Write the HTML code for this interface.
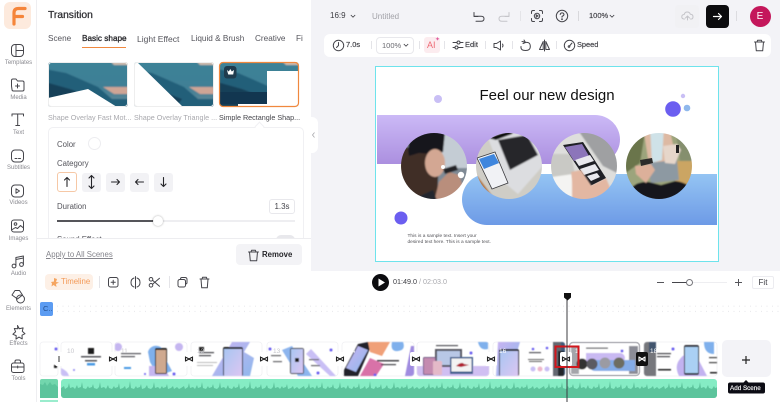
<!DOCTYPE html>
<html><head><meta charset="utf-8"><title>Transition</title>
<style>
*{box-sizing:border-box;margin:0;padding:0}
html,body{width:780px;height:402px;overflow:hidden;background:#fff;font-family:"Liberation Sans",sans-serif}
#r{position:relative;width:780px;height:402px;overflow:hidden;filter:blur(.3px)}
.a{position:absolute}
.t{position:absolute;white-space:nowrap;line-height:1}
.sl{position:absolute;width:37px;left:0;text-align:center;font-size:6px;color:#8a8a90;line-height:1}
svg{position:absolute;overflow:visible}
.i{fill:none;stroke:#45454b;stroke-width:1;stroke-linecap:round;stroke-linejoin:round}
.sep{position:absolute;width:1px;background:#e4e4e8}
.cat{position:absolute;top:173px;width:19px;height:19px;background:#f2f2f5;border-radius:3px}
.tab{position:absolute;top:35px;font-size:8.200px;color:#55555c;white-space:nowrap;line-height:8px}
.lb{position:absolute;top:113.500px;font-size:7.200px;color:#a9a9ae;white-space:nowrap;line-height:1}
.fl{position:absolute;font-size:7.800px;color:#55555c;white-space:nowrap;line-height:1}
</style></head><body><div id="r">

<!-- right background -->
<div class="a" style="left:311px;top:0;width:469px;height:271px;background:#f3f3f7"></div>

<!-- sidebar -->
<div class="a" style="left:0;top:0;width:37px;height:402px;background:#fff;border-right:1px solid #eeeef1"></div>
<div class="a" style="left:4px;top:2px;width:27px;height:27px;background:#fdeadd;border-radius:6px"></div>
<svg style="left:0;top:0" width="37" height="32"><path d="M14 24V13q0-4.500 4.500-4.500H25M14 16.500h8.500" fill="none" stroke="#f5853a" stroke-width="3.200" stroke-linecap="round"/></svg>

<svg style="left:0;top:42px" width="37" height="350" class="i">
<rect x="11.500" y="2.500" width="12" height="12" rx="3.500"/><path d="M16 2.500v12M16 8.500h7.500"/>
<path d="M11.500 44v-5.500q0-1.500 1.500-1.500h3l1.500 2h5q1.500 0 1.500 1.500v7q0 1.500-1.500 1.500h-9q-1.500 0-1.500-1.500zM17.500 42v4M15.500 44h4"/>
<path d="M12 74v-2h11.500v2M17.700 72v11.500M15.800 83.500h3.800"/>
<rect x="11.500" y="108" width="12" height="12" rx="3.500"/><path d="M15 116.500h2M18.500 116.500h2"/>
<rect x="11.500" y="143" width="12" height="12" rx="3.500"/><path d="M16 146.800l3.500 2.200-3.500 2.200z"/>
<rect x="11.500" y="178" width="12" height="12" rx="2.500"/><circle cx="15.500" cy="182" r="1.300"/><path d="M11.500 188l4-2.500 2 1 3-3 3 2.500"/>
<circle cx="14" cy="224" r="1.900"/><circle cx="21.500" cy="222.500" r="1.900"/><path d="M15.900 224v-8.500l7.500-1.500v8.500M15.900 217.500l7.500-1.500"/>
<path d="M15 248.500l4.500 0 3 4.500-5 4-5.500-4z"/><circle cx="20.500" cy="257" r="4"/>
<path d="M17.500 283.500l1.800 3.200 3.800-.8-.8 3.400 2.700 2.400-3 1.500.2 3.700-3.200-1.800-3 2 .2-3.500-3.300-1.300 2.700-2.500-1.300-3.300 3.500.3z"/>
<rect x="11.500" y="321" width="12.500" height="9.500" rx="2"/><path d="M15 321v-1.500q0-1.500 1.500-1.500h2.500q1.500 0 1.500 1.500v1.500M11.500 325h12.500M17.700 324v2"/>
</svg>
<div class="sl" style="top:60px">Templates</div>
<div class="sl" style="top:95px">Media</div>
<div class="sl" style="top:130px">Text</div>
<div class="sl" style="top:165px">Subtitles</div>
<div class="sl" style="top:200px">Videos</div>
<div class="sl" style="top:236px">Images</div>
<div class="sl" style="top:271px">Audio</div>
<div class="sl" style="top:306px">Elements</div>
<div class="sl" style="top:341px">Effects</div>
<div class="sl" style="top:376px">Tools</div>

<!-- panel -->
<div class="t" style="left:48px;top:10.500px;font-size:10.300px;color:#2c2c30;-webkit-text-stroke:.25px #2c2c30">Transition</div>
<div class="tab" style="left:48px">Scene</div>
<div class="tab" style="left:82px;color:#26262a;-webkit-text-stroke:.3px #26262a">Basic shape</div>
<div class="a" style="left:82px;top:47px;width:44px;height:1px;background:#f0883e"></div>
<div class="tab" style="left:137px;font-size:8.500px">Light Effect</div>
<div class="tab" style="left:191px">Liquid &amp; Brush</div>
<div class="tab" style="left:255px">Creative</div>
<div class="tab" style="left:296px;width:7px;overflow:hidden">Fi</div>

<svg style="left:48px;top:62px" width="252" height="46">
<defs>
<linearGradient id="sk" x1="0" y1="0" x2="0" y2="1"><stop offset="0" stop-color="#3c8297"/><stop offset=".55" stop-color="#3f7f95"/><stop offset="1" stop-color="#6d8a96"/></linearGradient>
<filter id="b1" x="-10%" y="-10%" width="120%" height="120%"><feGaussianBlur stdDeviation=".7"/></filter>
<filter id="b2" x="-5%" y="-5%" width="110%" height="110%"><feGaussianBlur stdDeviation=".4"/></filter>
<clipPath id="c1"><rect width="80" height="45" rx="3"/></clipPath>
<clipPath id="c2"><rect x="86" width="80" height="45" rx="3"/></clipPath>
<clipPath id="c3"><rect x="172" width="79" height="45" rx="3"/></clipPath>
<g id="mt"><g filter="url(#b1)"><rect x="-3" y="-3" width="86" height="51" fill="url(#sk)"/><path d="M-3 7l21 4 14 6 18 8 14 12H83V48H-3z" fill="#235f79"/><path d="M-3 20l25 7 26 10-8 11H-3z" fill="#123f58"/><path d="M55 25h28v7H66z" fill="#cfa595"/><path d="M60 -3h23v6H66z" fill="#cdbbae"/></g></g>
</defs>
<g clip-path="url(#c1)"><use href="#mt"/><path d="M0 36l40-9 29 18H0z" fill="#fff"/></g>
<rect x=".5" y=".5" width="79" height="44" rx="3" fill="none" stroke="#eee"/>
<g clip-path="url(#c2)"><use href="#mt" x="86"/><path d="M86 0h3l46 45H86z" fill="#fff"/></g>
<rect x="86.500" y=".5" width="79" height="44" rx="3" fill="none" stroke="#eee"/>
<g clip-path="url(#c3)"><use href="#mt" x="172"/><path d="M172 30h47v12h-47z" fill="#123650"/><rect x="190" y="42" width="62" height="3" fill="#fff"/><rect x="219" y="9" width="33" height="36" fill="#fff"/></g>
<rect x="171.500" y=".5" width="79" height="44" rx="3.500" fill="none" stroke="#f0883e" stroke-width="1.200"/>
<rect x="176" y="4" width="12.500" height="12.500" rx="3" fill="#1f3c4e"/><path d="M179 8l1.800 1.500L182.300 7l1.500 2.500L186 8l-.8 4.500h-5z" fill="#fff"/>
</svg>
<div class="lb" style="left:48px">Shape Overlay Fast Mot...</div>
<div class="lb" style="left:134px">Shape Overlay Triangle ...</div>
<div class="lb" style="left:219px;color:#45454b">Simple Rectangle Shap...</div>

<div class="a" style="left:48px;top:127px;width:256px;height:125px;border:1px solid #f0f0f3;border-radius:5px;background:#fff"></div>
<div class="a" style="left:256px;top:123px;width:7px;height:7px;background:#fff;transform:rotate(45deg);border-left:1px solid #f0f0f3;border-top:1px solid #f0f0f3"></div>
<div class="fl" style="left:57px;top:140.500px">Color</div>
<div class="a" style="left:88px;top:137px;width:13px;height:13px;border-radius:50%;border:1px solid #ededf0;background:#fff"></div>
<div class="fl" style="left:57px;top:159.500px">Category</div>
<div class="cat" style="left:57px;top:172px;width:20px;height:20px;background:#fff;border:1px solid #f6c8a6"></div>
<div class="cat" style="left:82px"></div>
<div class="cat" style="left:106px"></div>
<div class="cat" style="left:130px"></div>
<div class="cat" style="left:154px"></div>
<svg style="left:57px;top:172px" width="120" height="20" fill="none" stroke="#26262a" stroke-width="1.100" stroke-linecap="round" stroke-linejoin="round">
<path d="M10 14.500v-9M7.500 8L10 5.500 12.500 8"/>
<path d="M34.500 3.500v13M32 6l2.500-2.500L37 6M32 14l2.500 2.500L37 14"/>
<path d="M54.500 10h8M60 7.500l2.500 2.500L60 12.500"/>
<path d="M86.500 10h-8M81 7.500L78.500 10l2.500 2.500"/>
<path d="M106.500 5.500v9M104 12l2.500 2.500L109 12"/>
</svg>
<div class="fl" style="left:57px;top:202.500px">Duration</div>
<div class="a" style="left:269px;top:199px;width:26px;height:15px;border:1px solid #e8e8ec;border-radius:3px;background:#fff;font-size:8px;color:#45454b;text-align:center;line-height:13px">1.3s</div>
<div class="a" style="left:57px;top:220px;width:238px;height:2px;background:#eeeef1"></div>
<div class="a" style="left:57px;top:220px;width:101px;height:2px;background:#55555a"></div>
<div class="a" style="left:153px;top:216px;width:10px;height:10px;border-radius:50%;background:#fff;box-shadow:0 0 2px rgba(0,0,0,.35)"></div>
<div class="fl" style="left:57px;top:236px">Sound Effect</div>
<div class="a" style="left:276px;top:235px;width:19px;height:10px;border-radius:5px;background:#e8e8ec"></div>

<div class="a" style="left:37px;top:238px;width:274px;height:33px;background:#fff;border-top:1px solid #ededf0"></div>
<div class="fl" style="left:46px;top:251px;color:#85858c;text-decoration:underline">Apply to All Scenes</div>
<div class="a" style="left:236px;top:244px;width:66px;height:21px;border-radius:4px;background:#f3f3f6"></div>
<svg style="left:247px;top:249px" width="13" height="13" class="i" stroke-width="1.100"><path d="M1.500 3h10M4 3l.6-1.800h3.800L9 3M2.500 3l.8 8.800h6.400l.8-8.800"/></svg>
<div class="t" style="left:262px;top:251px;font-size:7.800px;color:#26262a;font-weight:bold">Remove</div>

<div class="a" style="left:311px;top:117px;width:7px;height:36px;background:#fff;border-radius:0 6px 6px 0"></div>
<svg style="left:311px;top:131px" width="6" height="8" fill="none" stroke="#a8a8ad" stroke-width=".8"><path d="M3.500 1.500L1.500 4l2 2.500"/></svg>

<!-- top bar -->
<div class="t" style="left:330px;top:12px;font-size:8px;color:#3c3c42">16:9</div>
<svg style="left:350px;top:14px" width="6" height="5" fill="none" stroke="#3c3c42" stroke-width=".8"><path d="M.8 1l2.200 2.200L5.200 1"/></svg>
<div class="t" style="left:372px;top:12.500px;font-size:8px;color:#a2a2a8">Untitled</div>
<svg style="left:472px;top:9px" width="14" height="14" class="i"><path d="M2 3.500v4h4M2.200 7.300h7q2.800 0 2.800 2.500T9 12.300H4"/></svg>
<svg style="left:497px;top:9px" width="14" height="14" fill="none" stroke="#c5c5ca" stroke-width="1" stroke-linecap="round" stroke-linejoin="round"><path d="M12 3.500v4H8M11.800 7.300h-7Q2 7.300 2 9.800t3 2.500h5"/></svg>
<div class="sep" style="left:520px;top:11px;height:10px"></div>
<svg style="left:530px;top:9px" width="14" height="14" class="i"><path d="M1.500 4.500V3q0-1.500 1.500-1.500h1.500M9.500 1.500H11q1.500 0 1.500 1.500v1.500M12.500 9.500V11q0 1.500-1.500 1.500H9.500M4.500 12.500H3q-1.500 0-1.500-1.500V9.500"/><circle cx="7" cy="7" r="2.700"/><path d="M6.200 5.800L8.200 7l-2 1.200z"/></svg>
<svg style="left:555px;top:9px" width="14" height="14" class="i"><circle cx="7" cy="7" r="5.700"/><path d="M5.200 5.500q.3-1.600 1.900-1.600t1.900 1.500Q9 6.500 7 7.500v.8"/><circle cx="7" cy="10.200" r=".4"/></svg>
<div class="sep" style="left:578px;top:11px;height:10px;background:#d8d8dc"></div>
<div class="t" style="left:589px;top:12px;font-size:7.500px;color:#3c3c42;-webkit-text-stroke:.15px #3c3c42">100%</div>
<svg style="left:609px;top:14px" width="6" height="5" fill="none" stroke="#3c3c42" stroke-width=".8"><path d="M.8 1l2.200 2.200L5.200 1"/></svg>
<div class="a" style="left:675px;top:5px;width:24px;height:23px;border-radius:4px;background:#f1f1f4"></div>
<svg style="left:681px;top:10px" width="13" height="12" fill="none" stroke="#c4c4c9" stroke-width="1" stroke-linecap="round" stroke-linejoin="round"><path d="M3.500 9H3Q.8 9 .8 6.800t2.400-2.300Q3.800 2 6.200 2t3.100 2.200q2.700 0 2.700 2.500T10 9h-.5M4.500 8l2-2 2 2M6.500 6v4"/></svg>
<div class="a" style="left:706px;top:5px;width:23px;height:23px;border-radius:4px;background:#0c0c0f"></div>
<svg style="left:712px;top:11px" width="11" height="11" fill="none" stroke="#fff" stroke-width="1.200" stroke-linecap="round" stroke-linejoin="round"><path d="M1.500 5.500h8M6.500 2.500l3 3-3 3"/></svg>
<div class="sep" style="left:736px;top:11px;height:10px;background:#dcdce0"></div>
<div class="a" style="left:749.500px;top:5.500px;width:21px;height:21px;border-radius:50%;background:#c4175b;color:#fff;font-size:10px;text-align:center;line-height:21px">E</div>

<!-- toolbar -->
<div class="a" style="left:324px;top:34px;width:447px;height:23px;border-radius:6px;background:#fff"></div>
<svg style="left:332px;top:39px" width="13" height="13" class="i"><circle cx="6.500" cy="6.500" r="5.200"/><path d="M6.500 3.500v3l-2 2"/></svg>
<div class="t" style="left:346px;top:41px;font-size:7.500px;color:#3c3c42;-webkit-text-stroke:.15px #3c3c42">7.0s</div>
<div class="sep" style="left:371px;top:41px;height:8px"></div>
<div class="a" style="left:376px;top:37px;width:38px;height:17px;border:1px solid #e8e8ec;border-radius:4px"></div>
<div class="t" style="left:382px;top:41.500px;font-size:7.500px;color:#6a6a70">100%</div>
<svg style="left:403px;top:43px" width="6" height="5" fill="none" stroke="#3c3c42" stroke-width=".8"><path d="M.8 1l2.200 2.200L5.200 1"/></svg>
<div class="sep" style="left:419px;top:41px;height:8px"></div>
<div class="a" style="left:424px;top:37px;width:16px;height:16px;border-radius:3px;background:#fcecef"></div>
<div class="t" style="left:427px;top:41px;font-size:9px;color:#ee6a74">AI</div>
<div class="t" style="left:435px;top:37px;font-size:6px;color:#e05fa0">✦</div>
<div class="sep" style="left:444px;top:41px;height:8px"></div>
<svg style="left:452px;top:39px" width="12" height="12" class="i"><path d="M1 3.500h4M8 3.500h3M1 8.500h2M6 8.500h5"/><circle cx="6.500" cy="3.500" r="1.500"/><circle cx="4.500" cy="8.500" r="1.500"/></svg>
<div class="t" style="left:465px;top:41px;font-size:7.500px;color:#3c3c42;-webkit-text-stroke:.15px #3c3c42">Edit</div>
<div class="sep" style="left:485px;top:41px;height:8px"></div>
<svg style="left:493px;top:39px" width="13" height="13" class="i"><path d="M1 4.500h2.500L7.500 2v9L3.500 8.500H1zM9.500 5q1 1.500 0 3"/></svg>
<div class="sep" style="left:512px;top:41px;height:8px"></div>
<svg style="left:519px;top:39px" width="13" height="13" class="i"><path d="M3 2.500q1.500 0 3 1 5-1 5.300 3.500T6.500 11.500 2 7.500M5 1L6.500 3.500 4 4.500"/></svg>
<svg style="left:538px;top:39px" width="13" height="13" class="i"><path d="M5.200 2.500v8H1.500zM7.800 2.500v8h3.700zM6.500 1v11"/></svg>
<div class="sep" style="left:556px;top:41px;height:8px"></div>
<svg style="left:563px;top:39px" width="13" height="13" class="i"><circle cx="6.500" cy="6.500" r="5.200"/><path d="M9 4L6.500 7"/><circle cx="6" cy="7.500" r=".8"/></svg>
<div class="t" style="left:577px;top:41px;font-size:7.400px;color:#3c3c42;-webkit-text-stroke:.15px #3c3c42">Speed</div>
<svg style="left:753px;top:39px" width="13" height="13" class="i" stroke-width="1.100"><path d="M1.500 3h10M4 3l.6-1.800h3.800L9 3M2.500 3l.8 8.800h6.400l.8-8.800"/></svg>

<!-- canvas -->
<div class="a" style="left:375px;top:66px;width:344px;height:196px;background:#fff;border:1.500px solid #6ee3ec"></div>
<svg style="left:375px;top:66px" width="344" height="196">
<defs>
<linearGradient id="pu" x1="0" y1="0" x2="0" y2="1"><stop offset="0" stop-color="#cbb9f6"/><stop offset="1" stop-color="#ab8fdf"/></linearGradient>
<linearGradient id="bl" x1="0" y1="0" x2="0" y2="1"><stop offset="0" stop-color="#94c4f3"/><stop offset="1" stop-color="#6d9ae6"/></linearGradient>
<clipPath id="p1"><circle cx="59" cy="100" r="33"/></clipPath>
<clipPath id="p2"><circle cx="134" cy="100" r="33"/></clipPath>
<clipPath id="p3"><circle cx="209" cy="100" r="33"/></clipPath>
<clipPath id="p4"><circle cx="284" cy="100" r="33"/></clipPath>
</defs>
<path d="M2 49H220a25 24.500 0 0 1 0 49H2z" fill="url(#pu)"/>
<path d="M342 108H112a25 25.500 0 0 0 0 51H342z" fill="url(#bl)"/>
<circle cx="63" cy="33" r="4" fill="#c9bff5"/><circle cx="298" cy="43" r="7.800" fill="#6b5ef0"/><circle cx="312" cy="42" r="3.300" fill="#8fb8ec"/><circle cx="308" cy="30" r="2.200" fill="#c9bff5"/><circle cx="26" cy="152" r="6.500" fill="#6b5ef0"/>

<g clip-path="url(#p1)"><g filter="url(#b1)">
<rect x="20" y="60" width="78" height="80" fill="#7f8a95"/><rect x="66" y="60" width="32" height="42" fill="#c4ccd4"/>
<path d="M20 84q8-4 16-2l28 6-2 52H20z" fill="#3f2f27"/>
<path d="M34 90q-4-20 14-26t22 2l-2 20-10 2-14-1z" fill="#15151a"/>
<ellipse cx="60" cy="97" rx="10" ry="14" fill="#d3a793"/>
<path d="M58 140l6-24 10-10 10 3 4 12-12 19z" fill="#b98e7c"/>
<path d="M68 103l13-4 2 5-13 4z" fill="#222226"/>
<path d="M36 134l22-10 6 16H36z" fill="#20262e"/>
</g><circle cx="86" cy="109" r="3.200" fill="#fff"/><circle cx="68" cy="101" r="2" fill="#fff"/></g>

<g clip-path="url(#p2)"><g filter="url(#b1)">
<rect x="95" y="60" width="78" height="80" fill="#cfcdc6"/><path d="M95 100l30 40h-30z" fill="#b4763c"/><path d="M146 140l27-32v32z" fill="#b98345"/>
<path d="M113 72l40-8 20 30-30 34-12-10z" fill="#dcdde0"/>
<path d="M113 72l28-10-4 6-16 6z" fill="#0e0e10"/>
<path d="M123 74l29-5 11 20-28 15z" fill="#26262b"/>
</g>
<path d="M102 92l18-6 13 31-16 6z" fill="#f1f2f5" stroke="#3a3a3e" stroke-width=".8"/><path d="M104 93l15-5 5 9-15 6z" fill="#3f86dd"/></g>

<g clip-path="url(#p3)"><g filter="url(#b1)">
<rect x="170" y="60" width="78" height="80" fill="#dededc"/><path d="M200 60h48v50l-20-10z" fill="#9fa0a2"/><path d="M170 88h26l4 20-30 4z" fill="#c9c9c5"/><path d="M170 112l28-4 18 32h-46z" fill="#f4f4f2"/>
<path d="M197 108l18 12 16-8 12 28h-46z" fill="#e3b7a2"/>
</g>
<path d="M188 79l20-3 23 36-16 8z" fill="#1f2026"/><path d="M190 81l17-3 7 12-15 5z" fill="#8c75ba"/><path d="M200 94l15-5 4 6-15 5zM205 103l15-5 4 6-15 5zM212 110l10-3 3 4-9 4z" fill="#e9e9ee"/>
<g filter="url(#b1)"><path d="M196 106l10-2 12 18 6 10h-22z" fill="#e3b7a2"/></g></g>

<g clip-path="url(#p4)"><g filter="url(#b1)">
<rect x="245" y="60" width="78" height="80" fill="#9ca47b"/><path d="M245 60h26l-6 37-20 14z" fill="#6a754b"/><path d="M300 95h23v35h-23z" fill="#cba564"/><path d="M300 60h23v35h-18z" fill="#858f6e"/>
<path d="M268 60h26l8 37-28 2z" fill="#ddb9a3"/>
<path d="M275 60h14l-2 34-10 3z" fill="#cfe2e8"/>
<path d="M272 97l30-3 2 20-28 3z" fill="#8d99a2"/>
<path d="M246 140q8-26 28-24l12 3 14-4q22 2 20 25z" fill="#19191b"/>
<path d="M260 100l16-2 4 6-9 13-10-9z" fill="#dcb09a"/>
<path d="M288 80l14-2 4 6-6 14-10-1z" fill="#e6d6ca"/>
</g>
<path d="M265 94l12-2 1 5-12 3z" fill="#2c2b2a"/><rect x="301" y="79" width="3" height="8" fill="#222"/></g>
</svg>
<div class="t" style="left:479.500px;top:88px;font-size:15px;color:#111">Feel our new design</div>
<div class="t" style="left:407.500px;top:235px;font-size:4.800px;color:#55555a">This is a sample text. Insert your</div>
<div class="t" style="left:407.500px;top:241px;font-size:4.800px;color:#55555a">desired text here. This is a sample text.</div>

<!-- timeline header -->
<div class="a" style="left:37px;top:271px;width:743px;height:131px;background:#fff"></div>
<div class="a" style="left:45px;top:274px;width:48px;height:16px;border-radius:4px;background:#fdf0e6"></div>
<svg style="left:50px;top:277px" width="10" height="11"><path d="M4 1l3 1-1 3 3 .5-3 1.500.5 3-3-2-2 1.500.5-3L1 5l3-.5z" fill="#f5a560"/></svg>
<div class="t" style="left:61px;top:278px;font-size:7.800px;color:#f39a58">Timeline</div>
<div class="sep" style="left:99px;top:276px;height:12px"></div>
<svg style="left:107px;top:276px" width="105" height="13" class="i">
<rect x="1.500" y="1.500" width="9.500" height="9.500" rx="2"/><path d="M6.200 4.200v4.200M4.100 6.300h4.200"/>
<path d="M27 2q-3 1-3 4.500t3 4.500M30 2q3 1 3 4.500T30 11M28.500 .5v12"/>
<circle cx="44" cy="3.300" r="1.800"/><circle cx="44" cy="9.300" r="1.800"/><path d="M45.500 4.300l7 6M45.500 8.300l7-6"/>
<rect x="71" y="3.500" width="7.500" height="7.500" rx="1.800"/><path d="M73.500 3.500V3q0-1.500 1.500-1.500h3q2 0 2 2v3q0 1.500-1.500 1.500"/>
<path d="M93 3h9M95 3l.6-1.800h3.800L100 3M94 3l.7 8.800h5.600L101 3"/>
</svg>
<div class="sep" style="left:169px;top:276px;height:12px"></div>
<div class="a" style="left:372px;top:274px;width:17px;height:17px;border-radius:50%;background:#0c0c0f"></div>
<svg style="left:372px;top:274px" width="17" height="17"><path d="M6.500 4.500l6.500 4-6.500 4z" fill="#fff"/></svg>
<div class="t" style="left:393px;top:278px;font-size:7.200px;color:#3c3c42">01:49.0 <span style="color:#a9a9ae">/ 02:03.0</span></div>
<div class="a" style="left:657px;top:282px;width:7px;height:1px;background:#55555a"></div>
<div class="a" style="left:672px;top:281.500px;width:55px;height:1.500px;background:#eeeef1"></div>
<div class="a" style="left:672px;top:281.500px;width:17px;height:1.500px;background:#45454a"></div>
<div class="a" style="left:686px;top:279px;width:7px;height:7px;border-radius:50%;background:#fff;border:1px solid #77777c"></div>
<svg style="left:734px;top:278px" width="9" height="9" stroke="#55555a" stroke-width="1"><path d="M4.500 1v7M1 4.500h7"/></svg>
<div class="a" style="left:752px;top:276px;width:22px;height:13px;border:1px solid #ececf0;border-radius:2px;font-size:8px;color:#3c3c42;text-align:center;line-height:11px">Fit</div>

<!-- tracks -->
<svg style="left:40px;top:300px" width="740" height="20">
<defs><pattern id="dt" width="5.500" height="5.200" patternUnits="userSpaceOnUse"><circle cx="1" cy="1" r=".5" fill="#dfdfe3"/></pattern></defs>
<rect x="15" y="3" width="725" height="12" fill="url(#dt)"/>
<rect x="0" y="2" width="13" height="14" rx="2" fill="#5c9cf2"/>
</svg>
<div class="t" style="left:43px;top:305px;font-size:7.500px;color:#24508f">C..</div>

<svg style="left:0;top:338px" width="780" height="64">
<defs>
<linearGradient id="lp" x1="0" y1="0" x2="1" y2="1"><stop offset="0" stop-color="#c9b4f2"/><stop offset="1" stop-color="#8fb8ec"/></linearGradient>
<linearGradient id="ph" x1="0" y1="0" x2="1" y2="1"><stop offset="0" stop-color="#a9c6f2"/><stop offset="1" stop-color="#dcc6f2"/></linearGradient>
<clipPath id="s0"><rect x="40" y="4" width="18" height="34" rx="3"/></clipPath>
<clipPath id="s1"><rect x="61" y="4" width="51" height="34" rx="3"/></clipPath>
<clipPath id="s2"><rect x="115" y="4" width="72" height="34" rx="3"/></clipPath>
<clipPath id="s3"><rect x="191" y="4" width="71" height="34" rx="3"/></clipPath>
<clipPath id="s4"><rect x="267" y="4" width="71" height="34" rx="3"/></clipPath>
<clipPath id="s5"><rect x="342" y="4" width="72" height="34" rx="3"/></clipPath>
<clipPath id="s6"><rect x="417" y="4" width="72" height="34" rx="3"/></clipPath>
<clipPath id="s7"><rect x="493" y="4" width="72" height="34" rx="3"/></clipPath>
<clipPath id="s8"><rect x="569" y="4" width="71" height="34" rx="3"/></clipPath>
<clipPath id="s9"><rect x="644" y="4" width="73" height="34" rx="3"/></clipPath>
<pattern id="wv" width="120" height="19" patternUnits="userSpaceOnUse" patternTransform="translate(61,41)">
<path d="M0 19V9L3 7 4 10 7 8 8 4 9 9 12 8 14 10 16 6 17 9 20 8 21 3 22 9 25 10 27 7 28 9 31 8 32 5 33 9 36 10 38 8 39 3 40 9 43 8 45 10 47 6 48 9 51 10 53 7 54 9 57 8 58 4 59 10 62 9 64 7 65 10 68 8 69 2 70 9 73 10 75 7 76 9 79 8 80 5 81 10 84 9 86 6 87 9 90 10 92 8 93 3 94 9 97 8 99 10 101 7 102 9 105 8 106 5 107 10 110 9 112 7 113 10 116 8 118 10 120 9V19z" fill="#5cc49c"/>
</pattern>
</defs>

<!-- scene cards base -->
<g fill="#fff" stroke="#f0f0f3" stroke-width=".8">
<rect x="40" y="4" width="18" height="34" rx="3"/><rect x="61" y="4" width="51" height="34" rx="3"/><rect x="115" y="4" width="72" height="34" rx="3"/><rect x="191" y="4" width="71" height="34" rx="3"/><rect x="267" y="4" width="71" height="34" rx="3"/><rect x="342" y="4" width="72" height="34" rx="3"/><rect x="417" y="4" width="72" height="34" rx="3"/><rect x="493" y="4" width="72" height="34" rx="3"/><rect x="644" y="4" width="73" height="34" rx="3"/>
</g>

<g filter="url(#b2)">
<g clip-path="url(#s0)"><circle cx="56" cy="11" r="1.500" fill="#6b5ef0"/><rect x="54" y="27" width="3" height="3" fill="#222"/></g>
<g clip-path="url(#s1)"><rect x="88" y="10" width="6" height="6" fill="#1b1b1f"/><rect x="81" y="18" width="20" height="1.500" fill="#55555a"/><rect x="85" y="22" width="12" height="1.500" fill="#55555a"/><rect x="87" y="25" width="8" height="2.500" fill="#4a9ae4"/><circle cx="74" cy="32" r="1" fill="#8f84f0"/><path d="M61 30q7 3 8 8h-8z" fill="#c9bff5"/></g>
<g clip-path="url(#s2)"><circle cx="118" cy="9" r="4" fill="#c5b6f0"/><path d="M148 14a8 8 0 0 1 16 4l8 15-14 5-8-14z" fill="#7fb0ec"/><path d="M149 28h14l6 10h-20z" fill="#c5b6f0"/><circle cx="179" cy="9" r="4" fill="#c5b6f0"/><rect x="155" y="10" width="12" height="26" rx="1.500" fill="#222"/><rect x="156" y="12" width="10" height="23" fill="#cfa98f"/><rect x="121" y="15" width="20" height="1.200" fill="#55555a"/><rect x="121" y="18" width="14" height="1.200" fill="#55555a"/><rect x="124" y="29" width="7" height="2" fill="#4a9ae4"/><circle cx="145" cy="36" r="1" fill="#6b5ef0"/><circle cx="174" cy="36" r="1.500" fill="#6b5ef0"/></g>
<g clip-path="url(#s3)"><path d="M232 4h18l-6 10 10 6-4 18h-38z" fill="url(#lp)"/><rect x="223" y="9" width="20" height="29" rx="2" fill="#1a1a1e"/><rect x="224" y="11" width="18" height="27" fill="url(#ph)"/><rect x="199" y="14" width="15" height="1.200" fill="#44444a"/><rect x="199" y="17" width="12" height="1.200" fill="#44444a"/><rect x="199" y="9" width="5" height="4" fill="#222"/><rect x="197" y="24" width="20" height="1" fill="#bbb"/><rect x="197" y="27" width="16" height="1" fill="#bbb"/></g>
<g clip-path="url(#s4)"><path d="M282 12l10-4 20 30h-14z" fill="#8db5ee"/><path d="M330 38l-24-22 5-5 25 27z" fill="#c9bff5"/><rect x="290" y="10" width="14" height="26" rx="2" fill="#44444a"/><rect x="291" y="11" width="12" height="24" fill="url(#ph)"/><rect x="295" y="20" width="4" height="4" fill="#222"/><circle cx="270" cy="11" r="1.500" fill="#6b5ef0"/><circle cx="331" cy="12" r="1.500" fill="#6b5ef0"/><circle cx="318" cy="35" r="1.500" fill="#6b5ef0"/><rect x="271" y="17" width="10" height="1.200" fill="#66666b"/><rect x="273" y="23" width="9" height="1.200" fill="#66666b"/><rect x="309" y="21" width="10" height="1.200" fill="#66666b"/><rect x="311" y="27" width="9" height="1.200" fill="#66666b"/></g>
<g clip-path="url(#s5)"><path d="M344 32l14-26 10-2 4 2-14 32h-14z" fill="#23232b"/><path d="M346 30l12-22 10 4-12 22z" fill="url(#lp)"/><path d="M368 4h22l-8 14-12-4z" fill="#f0a078"/><path d="M360 38l10-18 14 6-8 12z" fill="#d872a8"/><rect x="377" y="22" width="22" height="1.500" fill="#44444a"/><rect x="381" y="26" width="15" height="1.200" fill="#44444a"/><path d="M392 4h11q3 8-5 9t-6-9z" fill="#7fb0ec"/><path d="M405 38l6-30 3 0v30z" fill="#a08ce0"/><circle cx="375" cy="37" r="1.500" fill="#6b5ef0"/></g>
<g clip-path="url(#s6)"><rect x="417" y="28" width="72" height="10" fill="#d0bff2"/><rect x="435" y="11" width="27" height="18" fill="#55555f"/><rect x="437" y="13" width="23" height="14" fill="#b8c7e6"/><rect x="450" y="19" width="23" height="17" fill="#3f5f8f"/><rect x="451.500" y="20.500" width="20" height="13" fill="#f3f3f3"/><path d="M456 28q6-5 8-2l5 1-8 2z" fill="#b02233"/><rect x="423" y="19" width="13" height="18" rx="1.500" fill="#77608a"/><rect x="424" y="20" width="11" height="16" fill="#c48bb0"/><rect x="433" y="23" width="9" height="14" rx="1" fill="#e4b9c8"/><rect x="436" y="7" width="22" height="1.200" fill="#55555a"/><path d="M478 4h10v7q-8 2-10-7z" fill="#7fb0ec"/><circle cx="471" cy="15" r="1.500" fill="#6b5ef0"/></g>
<g clip-path="url(#s7)"><path d="M498 4h22l-10 34h-14z" fill="url(#lp)"/><rect x="499" y="11" width="20" height="27" rx="2" fill="#1a1a1e"/><rect x="500" y="13" width="18" height="25" fill="url(#ph)"/><rect x="529" y="14" width="12" height="1.200" fill="#55555a"/><rect x="528" y="21" width="16" height="1" fill="#666"/><rect x="529" y="23" width="13" height="1" fill="#666"/><circle cx="533" cy="11" r="1.300" fill="#6b5ef0"/><circle cx="547" cy="10" r="1.300" fill="#6b5ef0"/><circle cx="533" cy="31" r="2.500" fill="#c9bff5"/><circle cx="540" cy="31" r="2.500" fill="#eeb7cc"/><circle cx="547" cy="31" r="2.500" fill="#c9bff5"/><rect x="553" y="4" width="12" height="34" fill="#63676f"/><rect x="561" y="4" width="4" height="34" fill="#3f5a7a"/><rect x="558" y="13" width="6" height="25" fill="#22252b"/></g>
<g clip-path="url(#s8)"><rect x="569" y="4" width="71" height="34" fill="#fff"/><rect x="571" y="8" width="8" height="28" fill="#a4a5aa"/><rect x="629" y="8" width="9" height="28" fill="#8b8c96"/><path d="M586 15h34a5 5 0 0 1 0 10h-34z" fill="#c9b9f2"/><path d="M635 22h-40a5 5 0 0 0 0 11h40z" fill="#84ace8"/><circle cx="582" cy="26" r="5.500" fill="#333"/><circle cx="592" cy="26" r="5.500" fill="#5a5a62"/><circle cx="605" cy="25" r="5.500" fill="#9b9ba3"/><circle cx="619" cy="25" r="5.500" fill="#6d6d62"/><rect x="586" y="9.500" width="22" height="1.200" fill="#44444a"/><circle cx="622" cy="13" r="1.500" fill="#6b5ef0"/></g>
<g clip-path="url(#s9)"><rect x="644" y="4" width="12" height="34" fill="#76777c"/><rect x="649" y="4" width="7" height="10" fill="#42546e"/><path d="M680 21q5-7 15-6l12 23h-28q-5-10 1-17z" fill="#c2b2f0"/><rect x="684" y="7" width="15" height="30" rx="2" fill="#36363c"/><rect x="685" y="9" width="13" height="26" fill="#aad0f4"/><path d="M704 4h10v12q-10 0-10-12z" fill="#7fb0ec"/><rect x="657" y="15" width="14" height="1.200" fill="#44444a"/><rect x="657" y="18" width="13" height="1.200" fill="#44444a"/><rect x="658" y="31" width="13" height="1.500" fill="#222"/><circle cx="673" cy="11" r="1.500" fill="#6b5ef0"/><rect x="709" y="19" width="8" height="1.200" fill="#444"/><rect x="709" y="24" width="8" height="1.200" fill="#444"/><rect x="710" y="34" width="7" height="1.500" fill="#222"/></g>
</g>
<rect x="569.500" y="4.500" width="70" height="33" rx="3.500" fill="none" stroke="#b4b4ba" stroke-width="1.500"/>

<!-- scene numbers -->
<g font-size="6.500" fill="#c6c6cc" font-family="Liberation Sans, sans-serif">
<text x="67" y="15">10</text><text x="121" y="15">11</text><text x="197" y="15">12</text><text x="273" y="15">13</text>
<text x="348" y="15" fill="#fff">14</text><text x="423" y="15" fill="#fff">15</text><text x="499" y="15" fill="#fff">16</text><text x="575" y="15" fill="#fff">17</text><text x="650" y="15" fill="#fff">18</text>
</g>

<!-- transition buttons -->
<g>
<rect x="55" y="14" width="9" height="14" rx="2" fill="#fff"/><rect x="58.500" y="18" width="1" height="6" fill="#333"/>
<g id="tb"><rect x="107" y="14" width="12" height="14" rx="2" fill="#fff"/><path d="M109.500 18.500v5M116.500 18.500v5M109.500 19l7 4M116.500 19l-7 4" stroke="#222" stroke-width="1.100" fill="none"/></g>
<use href="#tb" x="76"/><use href="#tb" x="151"/><use href="#tb" x="227"/><use href="#tb" x="303"/><use href="#tb" x="378"/>
<use href="#tb" x="453"/>
<rect x="636" y="14" width="12" height="14" rx="2" fill="#111"/><path d="M639 18.500v5M645 18.500v5M639 19l6 4M645 19l-6 4" stroke="#fff" stroke-width="1.100" fill="none"/>
</g>
<rect x="555.500" y="8.500" width="23" height="20.500" fill="none" stroke="#d2161c" stroke-width="2"/>

<!-- audio -->
<rect x="40" y="41" width="18" height="19" rx="2" fill="#72d6ad"/>
<path d="M40 60V46l3 1 2-3 2 4 3-4 2 3 3-1 3 3v11z" fill="#5cc49c"/>
<rect x="61" y="41" width="656" height="19" rx="3" fill="#85ecc4"/>
<rect x="61" y="41" width="656" height="19" rx="3" fill="url(#wv)"/>

<path d="M40 62h18v3H40z" fill="#9aeccd"/>

<!-- add scene -->
<rect x="722" y="2" width="49" height="37" rx="5" fill="#f3f3f7"/>
<path d="M746 18v8M742 22h8" stroke="#222" stroke-width="1.200"/>
<path d="M743 45l3-3 3 3z" fill="#0c0c14"/>
<rect x="728" y="44.500" width="37" height="11" rx="2" fill="#0c0c14"/>

<!-- playhead -->
<rect x="566.500" y="-38" width="1" height="102" fill="#3c3c42"/>
</svg>
<svg style="left:564px;top:293px" width="7" height="8"><path d="M0 0h7v4.500L3.500 7.500 0 4.500z" fill="#111"/></svg>
<div class="t" style="left:730px;top:385.500px;font-size:6.300px;color:#fff;-webkit-text-stroke:.15px #fff">Add Scene</div>
</div></body></html>
